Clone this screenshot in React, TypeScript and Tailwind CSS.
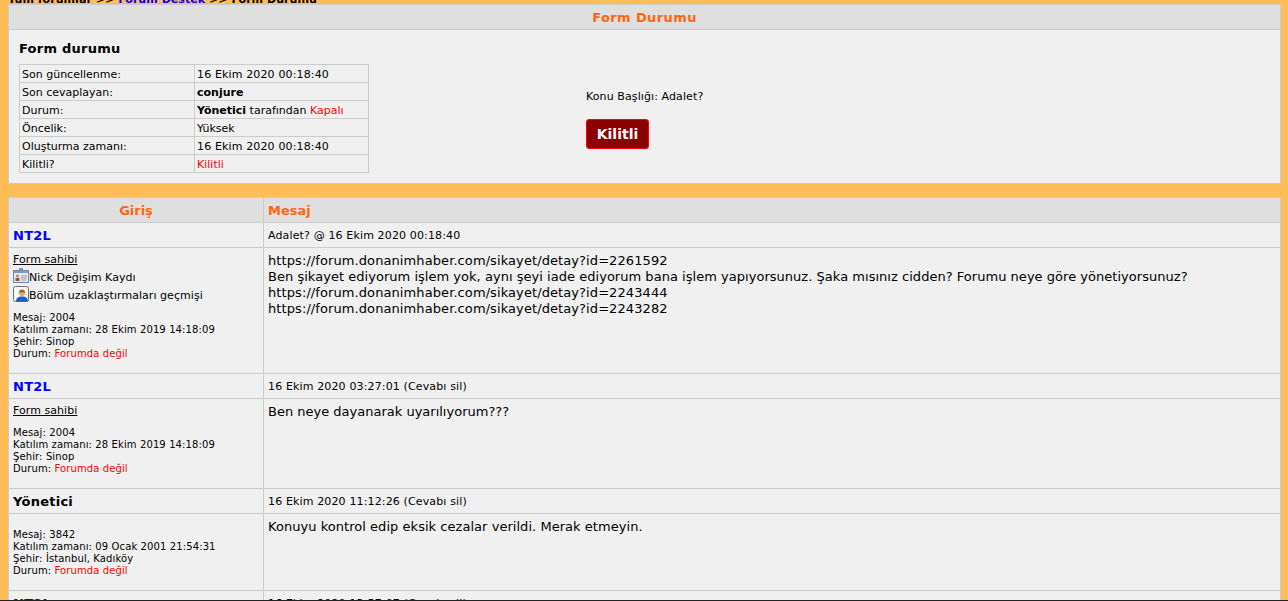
import type { ReactNode } from "react";

function CardIcon() {
  return (
    <svg width="16" height="16" viewBox="0 0 16 16" className="shrink-0">
      <rect x="6" y="0" width="4" height="3" fill="#8a94a0" />
      <rect x="0.5" y="2.5" width="15" height="12" fill="#e4e8f0" stroke="#6f86b4" />
      <rect x="1" y="3" width="14" height="2" fill="#7f9bd2" />
      <circle cx="4.5" cy="8" r="1.6" fill="#c08a60" />
      <rect x="2.5" y="10" width="4" height="3" fill="#a0522d" />
      <path d="M8 8h6M8 10h6M8 12h5" stroke="#98a2b4" />
    </svg>
  );
}

function UserIcon() {
  return (
    <svg width="16" height="16" viewBox="0 0 16 16" className="shrink-0">
      <rect x="0.5" y="0.5" width="15" height="15" rx="2" fill="#f7f7f2" stroke="#6f6f6f" />
      <circle cx="9" cy="7" r="3" fill="#d8a878" />
      <path d="M6 6.5a3 3 0 0 1 6 0z" fill="#9a6a3a" />
      <path d="M3 15.5c0-3.5 2-5 6-5s6 1.5 6 5z" fill="#1d5fc0" />
    </svg>
  );
}

function InfoRow({ label, children }: { label: string; children: ReactNode }) {
  return (
    <tr>
      <td className="h-[18px] w-[175px] border border-[#cccccc] px-[2px] pt-[2px] pb-0 leading-[15px]">{label}</td>
      <td className="h-[18px] border border-[#cccccc] px-[2px] pt-[2px] pb-0 leading-[15px]">{children}</td>
    </tr>
  );
}

function UserStats({ posts, joined, city }: { posts: string; joined: string; city: string }) {
  return (
    <div className="text-[10px] leading-[12px] tracking-[0.11px]">
      <div>Mesaj: {posts}</div>
      <div>Katılım zamanı: {joined}</div>
      <div>Şehir: {city}</div>
      <div>
        Durum: <span className="text-[#ff0000]">Forumda değil</span>
      </div>
    </div>
  );
}

function PostHead({ name, blue, info }: { name: string; blue?: boolean; info: string }) {
  return (
    <tr>
      <td className={`h-[25px] border border-[#cccccc] px-[4px] pt-[2px] pb-0 text-[13px] font-bold tracking-[0.25px] ${blue ? "text-[#0000ff]" : "text-black"}`}>
        {name}
      </td>
      <td className="h-[25px] border border-[#cccccc] px-[4px] pt-[2px] pb-0 text-[11px] tracking-[0.14px]">{info}</td>
    </tr>
  );
}

function PostBody({ height, left, children }: { height: string; left: ReactNode; children: ReactNode }) {
  return (
    <tr>
      <td className={`${height} border border-[#cccccc] px-[4px] pt-[5px] pb-0 align-top text-[11px] tracking-[0.05px]`}>{left}</td>
      <td className={`${height} border border-[#cccccc] px-[4px] pt-[5px] pb-0 align-top text-[13px] leading-[16px]`}>{children}</td>
    </tr>
  );
}

export default function App() {
  return (
    <div className="h-[601px] overflow-hidden border-b border-[#222222] bg-[#ffbd59] px-2 font-['DejaVu_Sans','Liberation_Sans',sans-serif] text-[11px] text-black">
      {/* page is scrolled a little, breadcrumb is cut by the top edge */}
      <div className="-mt-[7px] h-[11px] text-[11px] leading-[13px] font-bold tracking-[0.05px]">
        Tüm forumlar &gt;&gt; <span className="text-[#0000ff]">Forum Destek</span> &gt;&gt; Form Durumu
      </div>

      <div className="h-[180px] w-[1273px] border border-[#cccccc] bg-[#f0f0f0]">
        <div className="flex h-[25px] items-center justify-center border-b border-[#cccccc] bg-[#dfdfdf] pt-[2px] text-[13px] font-bold tracking-[0.4px] text-[#ff6611]">
          Form Durumu
        </div>
        <div className="flex">
          <div className="ml-[10px] w-[350px]">
            <div className="mt-[11px] text-[13px] leading-[16px] font-bold tracking-[0.25px]">Form durumu</div>
            <table className="mt-[7px] w-[350px] border-collapse">
              <tbody>
                <InfoRow label="Son güncellenme:">
                  <span className="tracking-[0.14px]">16 Ekim 2020 00:18:40</span>
                </InfoRow>
                <InfoRow label="Son cevaplayan:">
                  <b>conjure</b>
                </InfoRow>
                <InfoRow label="Durum:">
                  <b>Yönetici</b> tarafından <span className="text-[#ff0000]">Kapalı</span>
                </InfoRow>
                <InfoRow label="Öncelik:">Yüksek</InfoRow>
                <InfoRow label="Oluşturma zamanı:">
                  <span className="tracking-[0.14px]">16 Ekim 2020 00:18:40</span>
                </InfoRow>
                <InfoRow label="Kilitli?">
                  <span className="text-[#ff0000]">Kilitli</span>
                </InfoRow>
              </tbody>
            </table>
          </div>
          <div className="ml-[217px] pt-[60px]">
            <div className="leading-[13px] tracking-[0.1px]">Konu Başlığı: Adalet?</div>
            <div className="mt-[16px] flex h-[30px] w-[63px] items-center justify-center rounded-[3px] border border-[#ff0000] bg-[#8b0000] text-[14px] font-bold text-white">
              Kilitli
            </div>
          </div>
        </div>
      </div>

      <table className="mt-[13px] w-[1273px] table-fixed border-collapse bg-[#f0f0f0]">
        <colgroup>
          <col className="w-[255px]" />
          <col />
        </colgroup>
        <tbody>
          <tr className="bg-[#dfdfdf] text-[13px] font-bold text-[#ff6611]">
            <td className="h-[25px] border border-[#cccccc] p-0 pt-[2px] text-center">Giriş</td>
            <td className="h-[25px] border border-[#cccccc] px-[4px] pt-[2px] pb-0">Mesaj</td>
          </tr>
          <PostHead name="NT2L" blue info="Adalet? @ 16 Ekim 2020 00:18:40" />
          <PostBody
            height="h-[126px]"
            left={
              <>
                <div className="leading-[13px] underline">Form sahibi</div>
                <div className="flex h-[18px] items-end">
                  <CardIcon />
                  <span className="leading-[13px]">Nick Değişim Kaydı</span>
                </div>
                <div className="flex h-[18px] items-end">
                  <UserIcon />
                  <span className="leading-[13px]">Bölüm uzaklaştırmaları geçmişi</span>
                </div>
                <div className="mt-[10px]">
                  <UserStats posts="2004" joined="28 Ekim 2019 14:18:09" city="Sinop" />
                </div>
              </>
            }
          >
            <div className="tracking-[0.09px]">https://forum.donanimhaber.com/sikayet/detay?id=2261592</div>
            <div className="tracking-[0.03px]">Ben şikayet ediyorum işlem yok, aynı şeyi iade ediyorum bana işlem yapıyorsunuz. Şaka mısınız cidden? Forumu neye göre yönetiyorsunuz?</div>
            <div className="tracking-[0.09px]">https://forum.donanimhaber.com/sikayet/detay?id=2243444</div>
            <div className="tracking-[0.09px]">https://forum.donanimhaber.com/sikayet/detay?id=2243282</div>
          </PostBody>
          <PostHead name="NT2L" blue info="16 Ekim 2020 03:27:01 (Cevabı sil)" />
          <PostBody
            height="h-[90px]"
            left={
              <>
                <div className="leading-[13px] underline">Form sahibi</div>
                <div className="mt-[10px]">
                  <UserStats posts="2004" joined="28 Ekim 2019 14:18:09" city="Sinop" />
                </div>
              </>
            }
          >
            Ben neye dayanarak uyarılıyorum???
          </PostBody>
          <PostHead name="Yönetici" info="16 Ekim 2020 11:12:26 (Cevabı sil)" />
          <PostBody
            height="h-[77px]"
            left={
              <div className="mt-[10px]">
                <UserStats posts="3842" joined="09 Ocak 2001 21:54:31" city="İstanbul, Kadıköy" />
              </div>
            }
          >
            <span className="tracking-[0.04px]">Konuyu kontrol edip eksik cezalar verildi. Merak etmeyin.</span>
          </PostBody>
          <PostHead name="NT2L" blue info="16 Ekim 2020 13:57:07 (Cevabı sil)" />
        </tbody>
      </table>
    </div>
  );
}
